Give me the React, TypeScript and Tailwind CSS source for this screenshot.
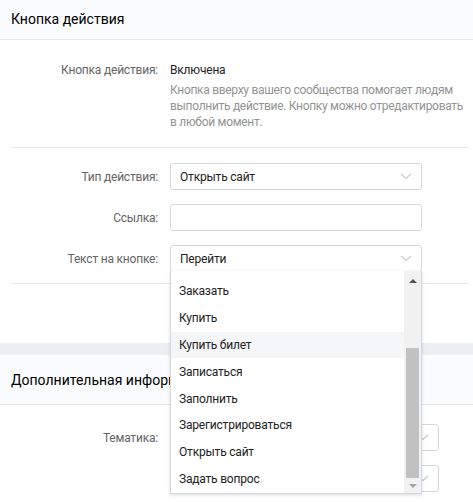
import { ReactNode } from "react";

const items = [
  "Заказать",
  "Купить",
  "Купить билет",
  "Записаться",
  "Заполнить",
  "Зарегистрироваться",
  "Открыть сайт",
  "Задать вопрос",
];

function Chevron() {
  return (
    <svg width="12" height="7" viewBox="0 0 12 7" className="shrink-0">
      <path d="M1 1l5 4.5L11 1" fill="none" stroke="#c5cbd1" strokeWidth="1.2" />
    </svg>
  );
}

function Row({ label, children }: { label: string; children: ReactNode }) {
  return (
    <div className="flex items-center">
      <div className="w-[158px] text-right text-[#656565]">{label}</div>
      <div className="ml-[12px]">{children}</div>
    </div>
  );
}

function Select({ value, width = "w-[252px]" }: { value?: string; width?: string }) {
  return (
    <div
      className={`${width} h-[27px] border border-[#d3d9de] rounded-[3px] flex items-center justify-between pl-[9px] pr-[9px] bg-white text-[#222]`}
    >
      <span>{value}</span>
      <Chevron />
    </div>
  );
}

function Dropdown() {
  return (
    <div className="absolute left-0 top-[26px] w-[252px] h-[223px] bg-white border border-[#d3d9de] border-t-0 shadow-[0_1px_3px_rgba(0,0,0,0.15)] z-10 flex overflow-hidden">
      <div className="flex-1 pt-[7px]">
        {items.map((it) => (
          <div
            key={it}
            className={`h-[26.8px] flex items-center pl-[8px] text-[#222] ${
              it === "Купить билет" ? "bg-[#f5f6f8]" : ""
            }`}
          >
            {it}
          </div>
        ))}
      </div>
      <div className="w-[17px] bg-[#f1f1f1] flex flex-col items-center">
        <div className="h-[17px] flex items-center justify-center pt-[3px]">
          <div className="w-0 h-0 border-l-[4px] border-r-[4px] border-b-[4px] border-l-transparent border-r-transparent border-b-[#505050]" />
        </div>
        <div className="h-[60px]" />
        <div className="w-[13px] h-[130px] bg-[#c1c1c1]" />
        <div className="flex-1 flex items-center justify-center">
          <div className="w-0 h-0 border-l-[4px] border-r-[4px] border-t-[4px] border-l-transparent border-r-transparent border-t-[#a3a3a3]" />
        </div>
      </div>
    </div>
  );
}

export default function App() {
  return (
    <div className="w-[473px] h-[502px] overflow-hidden bg-white text-[12px] leading-[16px] tracking-[-0.2px] font-['Roboto','Liberation_Sans',sans-serif]">
      <div className="h-[40px] bg-[#fafbfc] border-b border-[#e7e8ec] px-[11px] flex items-center pb-[2px] text-[14px] tracking-normal text-[#000]">
        Кнопка действия
      </div>

      <div className="pt-[22px] pb-[17px]">
        <div className="flex">
          <div className="w-[158px] text-right text-[#656565]">Кнопка действия:</div>
          <div className="ml-[12px] w-[300px]">
            <div className="text-[#222]">Включена</div>
            <div className="text-[#939393] mt-[4px] tracking-[-0.3px]">
              Кнопка вверху вашего сообщества помогает людям выполнить действие. Кнопку можно отредактировать в любой момент.
            </div>
          </div>
        </div>
      </div>

      <div className="ml-[10px] mr-[5px] border-t border-[#e7e8ec]" />

      <div className="pt-[15px] pb-[11px] flex flex-col gap-[14px]">
        <Row label="Тип действия:">
          <Select value="Открыть сайт" />
        </Row>
        <Row label="Ссылка:">
          <div className="w-[252px] h-[27px] border border-[#d3d9de] rounded-[3px] bg-white" />
        </Row>
        <Row label="Текст на кнопке:">
          <div className="relative">
            <Select value="Перейти" />
            <Dropdown />
          </div>
        </Row>
      </div>

      <div className="ml-[10px] mr-[5px] border-t border-[#e7e8ec]" />
      <div className="h-[59px]" />

      <div className="h-[12px] bg-[#edeef0]" />
      <div className="h-[50px] bg-[#fafbfc] border-b border-[#e7e8ec] px-[11px] flex items-center text-[14px] tracking-normal text-[#000]">
        Дополнительная информация
      </div>

      <div className="pt-[19px] flex flex-col gap-[14px]">
        <Row label="Тематика:">
          <Select width="w-[269px]" />
        </Row>
        <Row label="">
          <Select width="w-[269px]" />
        </Row>
      </div>
    </div>
  );
}
